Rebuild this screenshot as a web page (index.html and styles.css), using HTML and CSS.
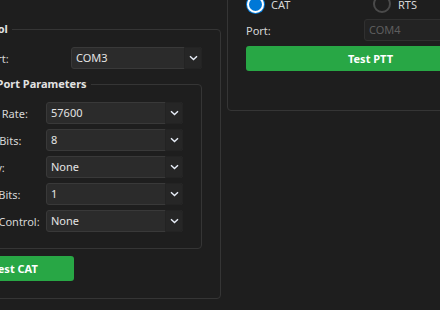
FILE: index.html
```html
<!DOCTYPE html>
<html lang="en">
<head>
    <meta charset="UTF-8">
    <title>Radio Settings</title>
    <link rel="stylesheet" href="styles.css">
</head>
<body>

<div class="page">
    <fieldset class="group cat-group">
        <legend>CAT Control</legend>
        <div class="port-row">
            <label>Port:</label>
            <div class="combo">COM3<span class="arrow"><svg width="9" height="6" viewBox="0 0 9 6"><path d="M1 1.2 L4.5 4.6 L8 1.2" fill="none" stroke="#e8eef8" stroke-width="1.4"/></svg></span></div>
        </div>

        <fieldset class="group serial-group">
            <legend>Serial Port Parameters</legend>
            <div class="form-grid">
                <label>Baud Rate:</label>
                <div class="combo">57600<span class="arrow"><svg width="9" height="6" viewBox="0 0 9 6"><path d="M1 1.2 L4.5 4.6 L8 1.2" fill="none" stroke="#e8eef8" stroke-width="1.4"/></svg></span></div>
                <label>Data Bits:</label>
                <div class="combo">8<span class="arrow"><svg width="9" height="6" viewBox="0 0 9 6"><path d="M1 1.2 L4.5 4.6 L8 1.2" fill="none" stroke="#e8eef8" stroke-width="1.4"/></svg></span></div>
                <label>Parity:</label>
                <div class="combo">None<span class="arrow"><svg width="9" height="6" viewBox="0 0 9 6"><path d="M1 1.2 L4.5 4.6 L8 1.2" fill="none" stroke="#e8eef8" stroke-width="1.4"/></svg></span></div>
                <label>Stop Bits:</label>
                <div class="combo">1<span class="arrow"><svg width="9" height="6" viewBox="0 0 9 6"><path d="M1 1.2 L4.5 4.6 L8 1.2" fill="none" stroke="#e8eef8" stroke-width="1.4"/></svg></span></div>
                <label>Flow Control:</label>
                <div class="combo">None<span class="arrow"><svg width="9" height="6" viewBox="0 0 9 6"><path d="M1 1.2 L4.5 4.6 L8 1.2" fill="none" stroke="#e8eef8" stroke-width="1.4"/></svg></span></div>
            </div>
        </fieldset>

        <button class="btn-green test-cat">Test CAT</button>
    </fieldset>

    <fieldset class="group ptt-group">
        <legend>PTT Control</legend>
        <div class="radios">
            <label class="radio"><span class="dot checked"></span>CAT</label>
            <label class="radio"><span class="dot"></span>RTS</label>
        </div>
        <div class="ptt-port">
            <label>Port:</label>
            <div class="combo disabled">COM4</div>
        </div>
        <button class="btn-green test-ptt">Test PTT</button>
    </fieldset>
</div>

</body>
</html>
```

FILE: styles.css
```css
body {
    margin: 0;
    padding: 0;
    background-color: #1e1e1e;
    color: #d6d6d6;
    font-family: "Noto Sans", sans-serif;
    font-size: 11px;
    overflow: hidden;
}

.page {
    display: flex;
    align-items: flex-start;
    gap: 6px;
    margin-left: -73px;
    width: 800px;
}

.group {
    margin: 0;
    border: 1px solid #353535;
    border-radius: 4px;
    min-width: 0;
}

.group legend {
    font-weight: bold;
    line-height: 16px;
    padding: 0 4px;
    color: #e2e2e2;
    white-space: nowrap;
}

.cat-group {
    flex-shrink: 0;
    margin-top: 21px;
    width: 294px;
    height: 278px;
    box-sizing: border-box;
    padding: 10px 18px 0 28px;
    display: flex;
    flex-direction: column;
}

.cat-group > legend {
    margin-left: -16px;
}

.port-row {
    display: grid;
    grid-template-columns: 89px 1fr;
    align-items: center;
    margin-left: 26px;
}

.port-row label {
    padding-left: 2px;
}

.combo {
    position: relative;
    height: 22px;
    box-sizing: border-box;
    background: #2b2b2b;
    border: 1px solid #393939;
    border-radius: 3px;
    padding-left: 4px;
    line-height: 20px;
    color: #e4e4e4;
}

.combo .arrow {
    position: absolute;
    top: -1px;
    right: -1px;
    bottom: -1px;
    width: 16px;
    background: #262626;
    border: 1px solid #232323;
    border-radius: 0 3px 3px 0;
    display: flex;
    align-items: center;
    justify-content: center;
}

.serial-group {
    margin-top: 7px;
    padding: 10px 19px 16px 14px;
}

.serial-group legend {
    margin-left: -12px;
}

.form-grid {
    display: grid;
    grid-template-columns: 75px 137px;
    row-gap: 5px;
    align-items: center;
}

.form-grid label {
    margin-left: 1px;
}

.btn-green {
    background: #28a745;
    color: #ffffff;
    border: none;
    border-radius: 3px;
    font-family: "Noto Sans", sans-serif;
    font-weight: bold;
    font-size: 11px;
    height: 25px;
    padding: 0;
}

.test-cat {
    margin-top: 7px;
    width: 118px;
}

.ptt-group {
    flex-shrink: 0;
    margin-top: -32px;
    width: 286px;
    box-sizing: border-box;
    padding: 9px 17px 39px 18px;
}

.radios {
    display: grid;
    grid-template-columns: 127px 1fr;
    height: 22px;
    align-items: center;
}

.radio {
    display: flex;
    align-items: center;
    gap: 7px;
}

.dot {
    width: 14px;
    height: 14px;
    border-radius: 50%;
    border: 2px solid #4a4a4a;
    background: #1e1e1e;
}

.dot.checked {
    border-color: #ffffff;
    background: #0078d7;
    width: 13px;
    height: 13px;
    border-width: 2px;
    box-shadow: 0 0 0 1px #0078d7;
    margin-left: 1px;
}

.ptt-port {
    display: grid;
    grid-template-columns: 118px 1fr;
    align-items: center;
    margin-top: 4px;
}

.combo.disabled {
    background: #232323;
    border-color: #303030;
    color: #5e5e5e;
}

.test-ptt {
    width: 100%;
    margin-top: 5px;
}
```
